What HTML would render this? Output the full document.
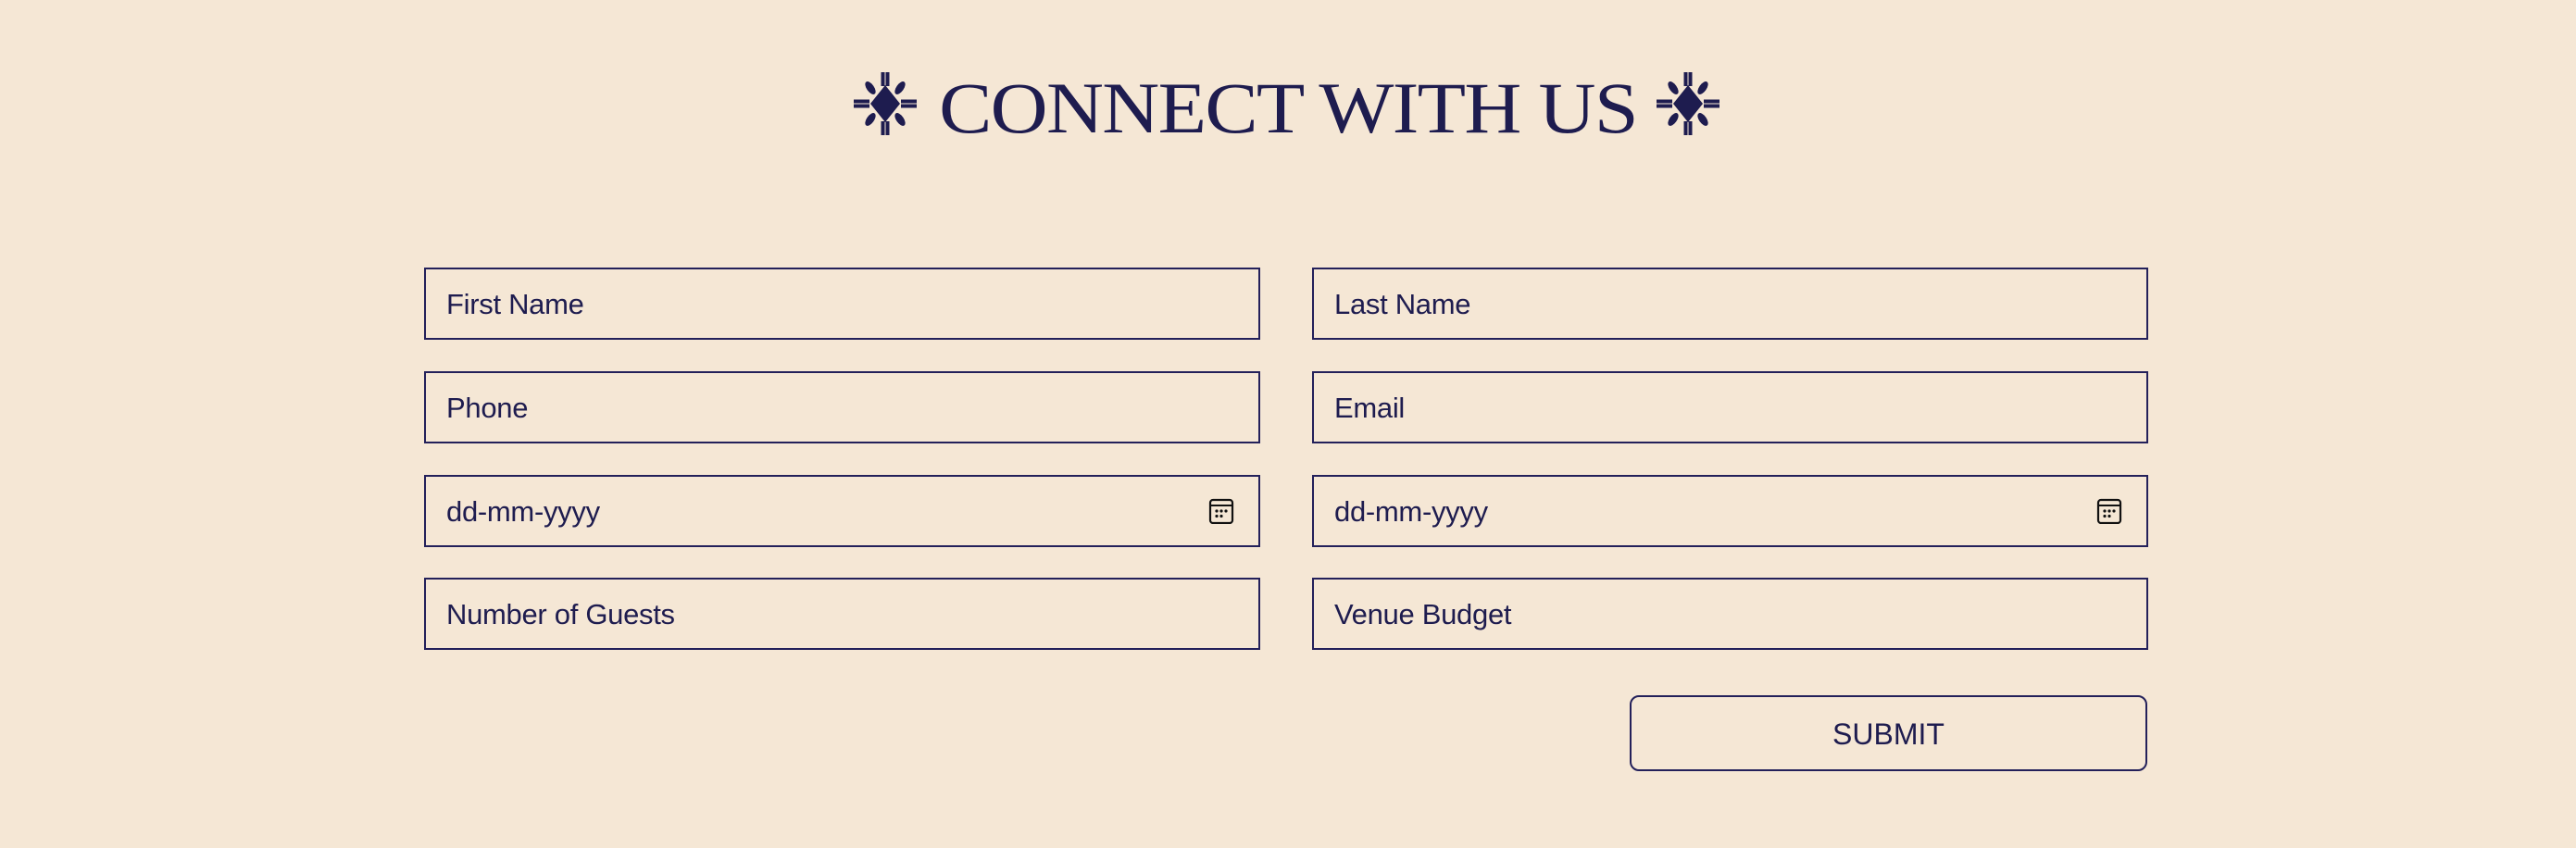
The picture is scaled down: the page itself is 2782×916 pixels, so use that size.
<!DOCTYPE html>
<html><head><meta charset="utf-8"><style>
html,body{margin:0;padding:0}
body{width:2782px;height:916px;background:#f5e7d5;position:relative;overflow:hidden;font-family:"Liberation Sans",sans-serif;color:#1e1c4f}
.title{position:absolute;left:0;width:2782px;top:67px;text-align:center;font-family:"Liberation Serif",serif;font-size:78px;line-height:100px;letter-spacing:-1.5px;transform:scaleX(1.10);transform-origin:1391px 0}
.orn{position:absolute;top:78px;width:68px;height:68px}
.in{position:absolute;width:899px;height:74px;border:2px solid #23205a;box-sizing:content-box}
.in span{position:absolute;left:22px;top:1px;line-height:74px;font-size:31px;letter-spacing:-0.3px}
.cal{position:absolute;right:26px;top:23px}
.btn{position:absolute;left:1760px;top:751px;width:555px;height:78px;border:2px solid #23205a;border-radius:10px;text-align:center;line-height:80px;font-size:32px}
</style></head><body>
<svg class="orn" style="left:922px" viewBox="0 0 68 68"><g fill="#1e1c4f">
<polygon points="34,14 50,34 34,54 18,34"/>
<rect x="29.5" y="0" width="4" height="15"/><rect x="34.5" y="0" width="4" height="15"/>
<rect x="29.5" y="53" width="4" height="15"/><rect x="34.5" y="53" width="4" height="15"/>
<rect x="0" y="29.5" width="17" height="4"/><rect x="0" y="34.5" width="17" height="4"/>
<rect x="51" y="29.5" width="17" height="4"/><rect x="51" y="34.5" width="17" height="4"/>
<ellipse cx="18" cy="17" rx="4" ry="8" transform="rotate(-35 18 17)"/>
<ellipse cx="50" cy="17" rx="4" ry="8" transform="rotate(35 50 17)"/>
<ellipse cx="18" cy="51" rx="4" ry="8" transform="rotate(35 18 51)"/>
<ellipse cx="50" cy="51" rx="4" ry="8" transform="rotate(-35 50 51)"/>
</g></svg>
<svg class="orn" style="left:1789px" viewBox="0 0 68 68"><g fill="#1e1c4f">
<polygon points="34,14 50,34 34,54 18,34"/>
<rect x="29.5" y="0" width="4" height="15"/><rect x="34.5" y="0" width="4" height="15"/>
<rect x="29.5" y="53" width="4" height="15"/><rect x="34.5" y="53" width="4" height="15"/>
<rect x="0" y="29.5" width="17" height="4"/><rect x="0" y="34.5" width="17" height="4"/>
<rect x="51" y="29.5" width="17" height="4"/><rect x="51" y="34.5" width="17" height="4"/>
<ellipse cx="18" cy="17" rx="4" ry="8" transform="rotate(-35 18 17)"/>
<ellipse cx="50" cy="17" rx="4" ry="8" transform="rotate(35 50 17)"/>
<ellipse cx="18" cy="51" rx="4" ry="8" transform="rotate(35 18 51)"/>
<ellipse cx="50" cy="51" rx="4" ry="8" transform="rotate(-35 50 51)"/>
</g></svg>
<div class="title">CONNECT WITH US</div>

<div class="in" style="left:458px;top:289px"><span>First Name</span></div>
<div class="in" style="left:1417px;top:289px"><span>Last Name</span></div>
<div class="in" style="left:458px;top:401px"><span>Phone</span></div>
<div class="in" style="left:1417px;top:401px"><span>Email</span></div>
<div class="in" style="left:458px;top:513px"><span>dd-mm-yyyy</span>
<svg class="cal" width="28" height="28" viewBox="0 0 28 28"><rect x="2" y="2" width="24" height="25" rx="3" fill="none" stroke="#111" stroke-width="2.2"/><line x1="2" y1="8" x2="26" y2="8" stroke="#111" stroke-width="2"/><g fill="#111"><circle cx="9" cy="14" r="1.6"/><circle cx="14" cy="14" r="1.6"/><circle cx="19" cy="14" r="1.6"/><circle cx="9" cy="19.5" r="1.6"/><circle cx="14" cy="19.5" r="1.6"/></g></svg></div>
<div class="in" style="left:1417px;top:513px"><span>dd-mm-yyyy</span>
<svg class="cal" width="28" height="28" viewBox="0 0 28 28"><rect x="2" y="2" width="24" height="25" rx="3" fill="none" stroke="#111" stroke-width="2.2"/><line x1="2" y1="8" x2="26" y2="8" stroke="#111" stroke-width="2"/><g fill="#111"><circle cx="9" cy="14" r="1.6"/><circle cx="14" cy="14" r="1.6"/><circle cx="19" cy="14" r="1.6"/><circle cx="9" cy="19.5" r="1.6"/><circle cx="14" cy="19.5" r="1.6"/></g></svg></div>
<div class="in" style="left:458px;top:624px"><span>Number of Guests</span></div>
<div class="in" style="left:1417px;top:624px"><span>Venue Budget</span></div>
<div class="btn">SUBMIT</div>
</body></html>
